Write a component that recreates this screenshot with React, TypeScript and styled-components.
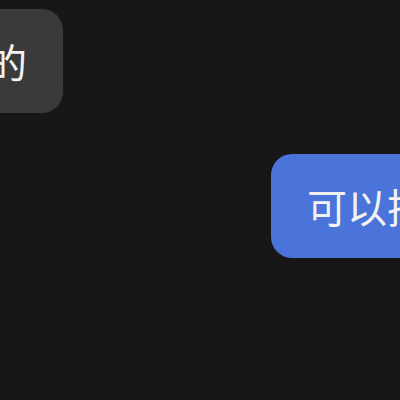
import styled, { createGlobalStyle } from 'styled-components'

const GlobalStyle = createGlobalStyle`
  html, body {
    margin: 0;
    padding: 0;
    background: #171717;
  }
  body {
    font-family: "Noto Sans CJK SC", "Noto Sans", sans-serif;
  }
`

const messages = [
  { id: 1, mine: false, text: '好的' },
  { id: 2, mine: true, text: '可以把它发给我' },
]

const App = () => {
  return (
    <>
      <GlobalStyle />
      <Chat>
        {messages.map((m) => (
          <Row key={m.id} $mine={m.mine}>
            <Bubble $mine={m.mine}>{m.text}</Bubble>
          </Row>
        ))}
      </Chat>
    </>
  )
}

export default App

// the screenshot is a crop of a wider chat, so bubbles run past both edges
const Chat = styled.div`
  width: 400px;
  height: 400px;
  overflow: hidden;
  display: flex;
  flex-direction: column;
  gap: 41px;
  padding-top: 9px;
  box-sizing: border-box;
  background: #171717;
`

const Row = styled.div<{ $mine: boolean }>`
  display: flex;
  padding-left: ${(p) => (p.$mine ? '271px' : '0')};
`

const Bubble = styled.div<{ $mine: boolean }>`
  flex-shrink: 0;
  white-space: nowrap;
  box-sizing: border-box;
  height: 104px;
  display: flex;
  align-items: center;
  padding: 0 36px;
  margin-left: ${(p) => (p.$mine ? '0' : '-89px')};
  border-radius: 21px;
  font-size: 40px;
  line-height: 48px;
  color: #f2f2f2;
  background: ${(p) => (p.$mine ? '#4b74db' : '#3a3a3a')};
`
